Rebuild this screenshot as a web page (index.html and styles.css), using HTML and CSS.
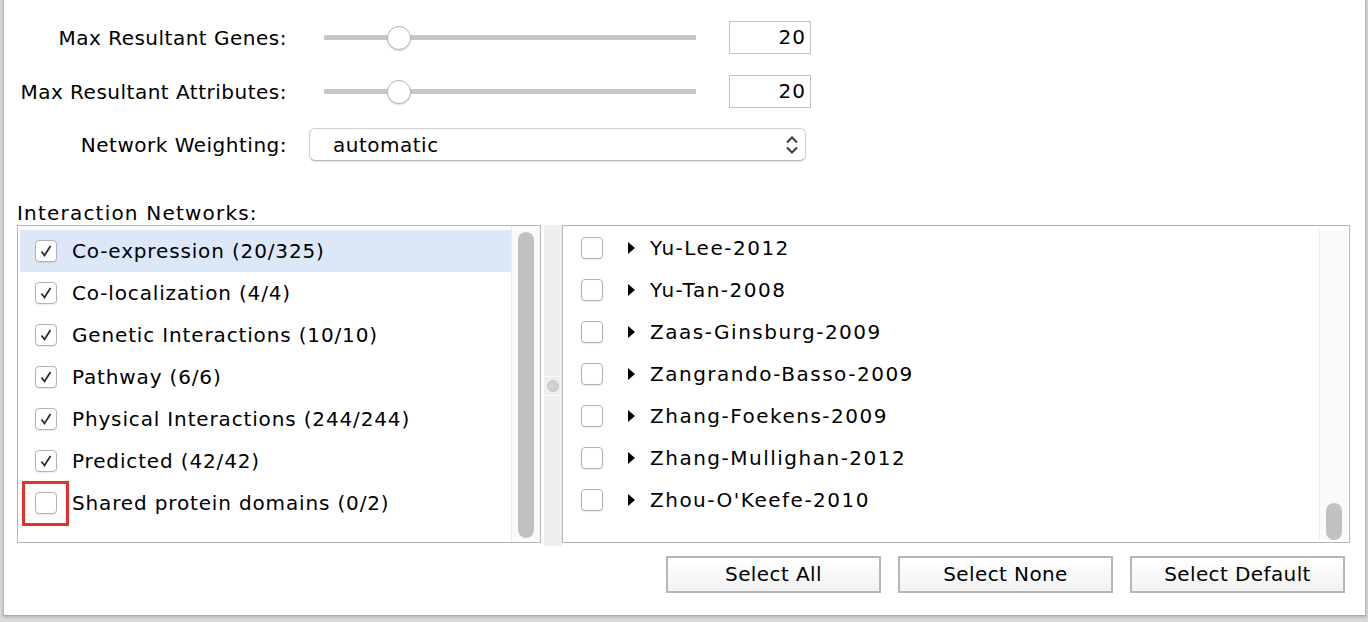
FILE: index.html
```html
<!DOCTYPE html>
<html>
<head>
<meta charset="utf-8">
<link rel="stylesheet" href="styles.css">
</head>
<body>
<div class="dialog">
  <div class="form">
    <div class="frow">
      <label class="flabel">Max Resultant Genes:</label>
      <div class="slider"><div class="track"></div><div class="thumb"></div></div>
      <div class="numbox">20</div>
    </div>
    <div class="frow">
      <label class="flabel">Max Resultant Attributes:</label>
      <div class="slider"><div class="track"></div><div class="thumb"></div></div>
      <div class="numbox">20</div>
    </div>
    <div class="frow frow3">
      <label class="flabel">Network Weighting:</label>
      <div class="combo">
        <span>automatic</span>
        <svg class="updown" width="14" height="20" viewBox="0 0 14 20"><path d="M2 7.5 L7 2.5 L12 7.5 M2 12.5 L7 17.5 L12 12.5" fill="none" stroke="#3a3a3a" stroke-width="2"/></svg>
      </div>
    </div>
  </div>

  <div class="section-title">Interaction Networks:</div>

  <div class="panels">
    <div class="panel left-panel">
      <ul class="list">
        <li class="item selected"><span class="cb checked"><svg width="14" height="14" viewBox="0 0 14 14"><path d="M2.5 7.5 L5.5 11.5 L11.5 2" fill="none" stroke="#2b2b2b" stroke-width="1.8"/></svg></span><span>Co-expression (20/325)</span></li>
        <li class="item"><span class="cb checked"><svg width="14" height="14" viewBox="0 0 14 14"><path d="M2.5 7.5 L5.5 11.5 L11.5 2" fill="none" stroke="#2b2b2b" stroke-width="1.8"/></svg></span><span>Co-localization (4/4)</span></li>
        <li class="item"><span class="cb checked"><svg width="14" height="14" viewBox="0 0 14 14"><path d="M2.5 7.5 L5.5 11.5 L11.5 2" fill="none" stroke="#2b2b2b" stroke-width="1.8"/></svg></span><span>Genetic Interactions (10/10)</span></li>
        <li class="item"><span class="cb checked"><svg width="14" height="14" viewBox="0 0 14 14"><path d="M2.5 7.5 L5.5 11.5 L11.5 2" fill="none" stroke="#2b2b2b" stroke-width="1.8"/></svg></span><span>Pathway (6/6)</span></li>
        <li class="item"><span class="cb checked"><svg width="14" height="14" viewBox="0 0 14 14"><path d="M2.5 7.5 L5.5 11.5 L11.5 2" fill="none" stroke="#2b2b2b" stroke-width="1.8"/></svg></span><span>Physical Interactions (244/244)</span></li>
        <li class="item"><span class="cb checked"><svg width="14" height="14" viewBox="0 0 14 14"><path d="M2.5 7.5 L5.5 11.5 L11.5 2" fill="none" stroke="#2b2b2b" stroke-width="1.8"/></svg></span><span>Predicted (42/42)</span></li>
        <li class="item"><span class="hl"><span class="cb"></span></span><span>Shared protein domains (0/2)</span></li>
      </ul>
      <div class="vscroll"><div class="vthumb full"></div></div>
    </div>

    <div class="splitter"><div class="knob"><div class="dot"></div></div></div>

    <div class="panel right-panel">
      <ul class="list rlist">
        <li class="ritem"><span class="cb"></span><svg class="tri" width="7" height="12" viewBox="0 0 7 12"><path d="M0 0 L7 6 L0 12 Z" fill="#000"/></svg><span>Yu-Lee-2012</span></li>
        <li class="ritem"><span class="cb"></span><svg class="tri" width="7" height="12" viewBox="0 0 7 12"><path d="M0 0 L7 6 L0 12 Z" fill="#000"/></svg><span>Yu-Tan-2008</span></li>
        <li class="ritem"><span class="cb"></span><svg class="tri" width="7" height="12" viewBox="0 0 7 12"><path d="M0 0 L7 6 L0 12 Z" fill="#000"/></svg><span>Zaas-Ginsburg-2009</span></li>
        <li class="ritem"><span class="cb"></span><svg class="tri" width="7" height="12" viewBox="0 0 7 12"><path d="M0 0 L7 6 L0 12 Z" fill="#000"/></svg><span>Zangrando-Basso-2009</span></li>
        <li class="ritem"><span class="cb"></span><svg class="tri" width="7" height="12" viewBox="0 0 7 12"><path d="M0 0 L7 6 L0 12 Z" fill="#000"/></svg><span>Zhang-Foekens-2009</span></li>
        <li class="ritem"><span class="cb"></span><svg class="tri" width="7" height="12" viewBox="0 0 7 12"><path d="M0 0 L7 6 L0 12 Z" fill="#000"/></svg><span>Zhang-Mullighan-2012</span></li>
        <li class="ritem"><span class="cb"></span><svg class="tri" width="7" height="12" viewBox="0 0 7 12"><path d="M0 0 L7 6 L0 12 Z" fill="#000"/></svg><span>Zhou-O'Keefe-2010</span></li>
      </ul>
      <div class="vscroll"><div class="vthumb small"></div></div>
    </div>
  </div>

  <div class="buttons">
    <button class="btn">Select All</button>
    <button class="btn">Select None</button>
    <button class="btn">Select Default</button>
  </div>
</div>
</body>
</html>
```
FILE: styles.css
```css
* { box-sizing: border-box; }
html, body {
  margin: 0;
  padding: 0;
  width: 1368px;
  height: 622px;
  overflow: hidden;
  background: #d9d9d9;
  font-family: "DejaVu Sans", "Liberation Sans", sans-serif;
  font-size: 20px;
  color: #000;
}
body { padding-left: 3px; }

.dialog {
  width: 1363px;
  height: 616px;
  background: #fff;
  border-left: 1px solid #b9b9b9;
  border-right: 1px solid #b9b9b9;
  border-bottom: 1px solid #a9a9a9;
  box-shadow: 0 1px 3px rgba(0,0,0,0.2);
  padding: 21px 0 0 13px;
  display: flex;
  flex-direction: column;
}

/* form */
.form { display: flex; flex-direction: column; }
.frow {
  display: flex;
  align-items: center;
  height: 33px;
  margin-bottom: 21px;
}
.frow3 { margin-top: -1px; margin-bottom: 0; }
.flabel {
  width: 270px;
  text-align: right;
  white-space: nowrap;
  flex: none;
  letter-spacing: 0.5px;
}
.slider {
  position: relative;
  margin-left: 37px;
  width: 372px;
  height: 24px;
  display: flex;
  align-items: center;
}
.track {
  width: 100%;
  height: 5px;
  background: #c6c6c6;
  border-radius: 1px;
}
.thumb {
  position: absolute;
  left: 63px;
  top: 0;
  width: 24px;
  height: 24px;
  border-radius: 50%;
  background: #fff;
  border: 1px solid #b4b4b4;
  box-shadow: 0 1px 1px rgba(0,0,0,0.15);
}
.numbox {
  margin-left: 33px;
  width: 82px;
  height: 33px;
  border: 1px solid #c3c3c3;
  text-align: right;
  padding-right: 4px;
  line-height: 31px;
  font-size: 20px;
  letter-spacing: 1px;
}
.combo {
  margin-left: 22px;
  width: 497px;
  height: 33px;
  border: 1px solid #cfcfcf;
  border-bottom-color: #bdbdbd;
  border-radius: 6px;
  box-shadow: 0 1px 1px rgba(0,0,0,0.12);
  display: flex;
  align-items: center;
  justify-content: space-between;
  padding: 0 6px 0 23px;
  letter-spacing: 0.5px;
}
.updown { display: block; }

.section-title {
  margin-top: 40px;
  height: 24px;
  line-height: 24px;
  letter-spacing: 1.2px;
}

/* panels */
.panels {
  display: flex;
  align-items: flex-start;
  height: 321px;
}
.panel {
  height: 318px;
  border: 1px solid #b5b5b5;
  display: flex;
  background: #fff;
}
.left-panel { width: 524px; padding: 4px 0 0 2px; }
.right-panel { width: 788px; padding: 0; }
.list {
  list-style: none;
  margin: 0;
  padding: 0;
  flex: 1;
  letter-spacing: 0.85px;
}
.item {
  height: 42px;
  display: flex;
  align-items: center;
  padding-left: 15px;
  white-space: nowrap;
}
.item.selected { background: #dce7f8; }
.cb {
  width: 22px;
  height: 22px;
  border: 1px solid #b3b3b3;
  border-radius: 4px;
  background: #fff;
  box-shadow: 0 1px 1px rgba(0,0,0,0.08);
  display: inline-flex;
  align-items: center;
  justify-content: center;
  flex: none;
}
.item .cb { margin-right: 15px; }
.item .hl .cb { margin-right: 0; }
.hl {
  display: inline-flex;
  align-items: center;
  justify-content: center;
  width: 47px;
  height: 45px;
  margin-left: -13px;
  margin-right: 3px;
  border: 3px solid #e8302a;
}
.rlist { padding-top: 1px; letter-spacing: 1.5px; }
.ritem {
  height: 42px;
  display: flex;
  align-items: center;
  padding-left: 18px;
  white-space: nowrap;
}
.ritem .cb { margin-right: 25px; }
.tri { margin-right: 15px; flex: none; }

.vscroll {
  width: 29px;
  flex: none;
  background: #fafafa;
  border-left: 1px solid #ececec;
  position: relative;
}
.left-panel .vscroll { margin-top: -4px; height: 316px; }
.right-panel .vscroll { margin: 4px 1px 0 0; height: 310px; }
.vthumb {
  position: absolute;
  left: 6px;
  width: 16px;
  background: #c1c1c1;
  border-radius: 8px;
}
.vthumb.full { top: 6px; bottom: 4px; }
.vthumb.small { bottom: 0px; height: 37px; }

.splitter {
  width: 18px;
  height: 321px;
  margin-left: 3px;
  background: #eeeeee;
  display: flex;
  flex-direction: column;
  justify-content: center;
}
.knob {
  height: 20px;
  border-top: 1px solid #fafafa;
  border-bottom: 1px solid #fafafa;
  display: flex;
  align-items: center;
  justify-content: center;
}
.dot {
  width: 12px;
  height: 12px;
  border-radius: 50%;
  background: radial-gradient(circle at 50% 40%, #d8d8d8, #c4c4c4);
  border: 1px solid #c8c8c8;
}

/* buttons */
.buttons {
  display: flex;
  justify-content: flex-end;
  gap: 17px;
  margin-top: 10px;
  padding-right: 20px;
}
.btn {
  width: 215px;
  height: 37px;
  border: 2px solid #b6b6b6;
  background: linear-gradient(#ffffff, #f2f2f2);
  font-family: "DejaVu Sans", "Liberation Sans", sans-serif;
  font-size: 20px;
  letter-spacing: 0.4px;
  color: #000;
  padding: 0;
  line-height: 33px;
}
```
